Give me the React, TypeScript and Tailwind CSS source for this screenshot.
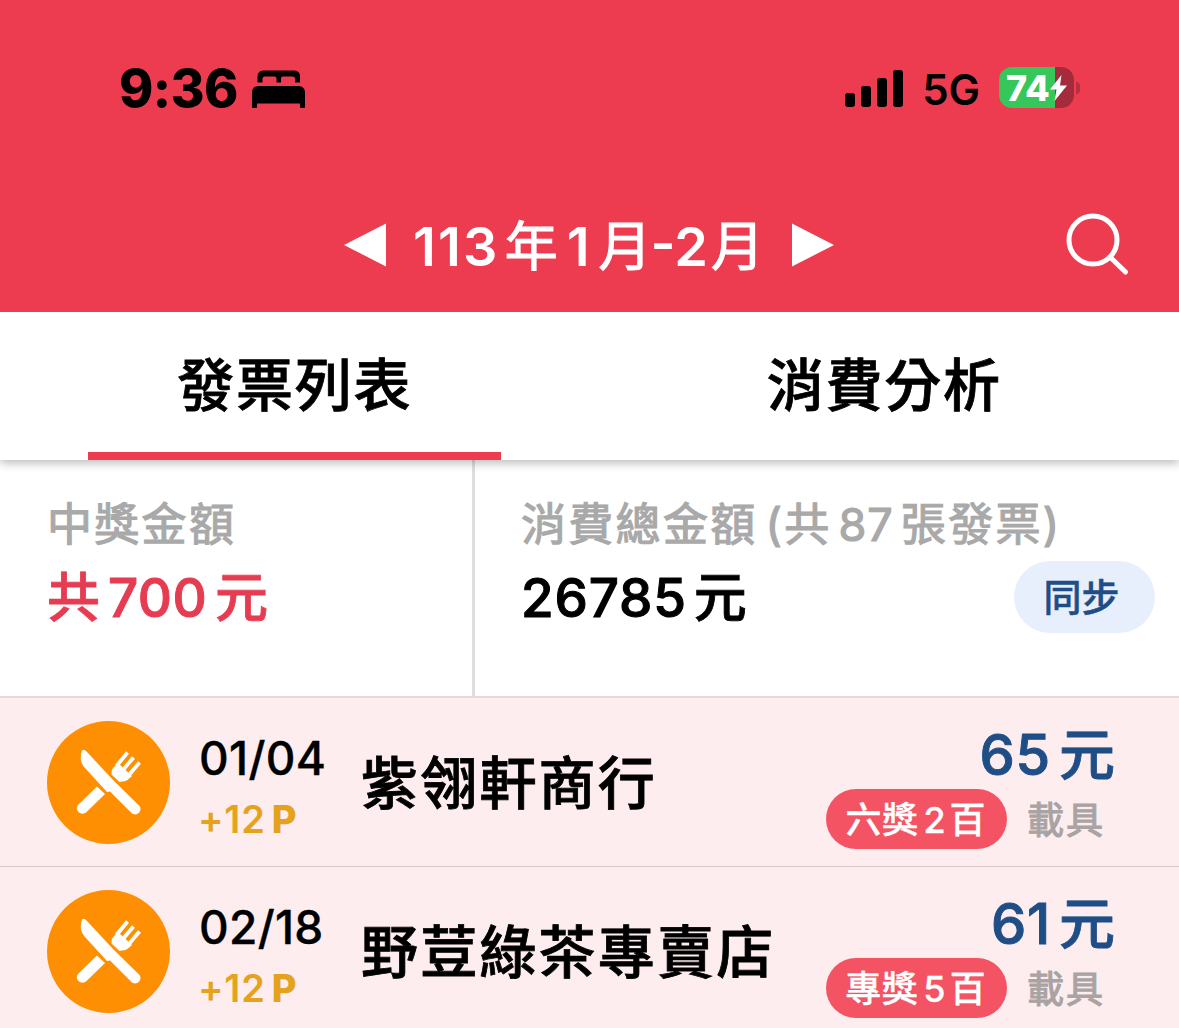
import clsx from 'clsx';

type Invoice = {
  id: string;
  date: string;
  points: string;
  shop: string;
  amount: string;
  prize: [string, string, string];
};

const invoices: Invoice[] = [
  { id: 'a', date: '01/04', points: '+12', shop: '紫翎軒商行', amount: '65', prize: ['六獎', '2', '百'] },
  { id: 'b', date: '02/18', points: '+12', shop: '野荳綠茶專賣店', amount: '61', prize: ['專獎', '5', '百'] }
];

const tabs = [
  { label: '發票列表', active: true },
  { label: '消費分析', active: false }
];

function BedIcon() {
  return (
    <svg width="54" height="38" viewBox="0 0 54 38" fill="#000">
      <path d="M5.500 12.500V6a5.500 5.500 0 0 1 5.500-5.500h31.500a5.500 5.500 0 0 1 5.500 5.500v6.500h-5V9a2.500 2.500 0 0 0-2.500-2.500h-9.500a2 2 0 0 0-2 2v4h-4.500v-4a2 2 0 0 0-2-2h-9.500a2.500 2.500 0 0 0-2.500 2.500v3.500z" />
      <path d="M0 37V22a6 6 0 0 1 6-6h41a6 6 0 0 1 6 6v15a1 1 0 0 1-1 1h-3a1 1 0 0 1-1-1v-3.500h-43v3.500a1 1 0 0 1-1 1h-3a1 1 0 0 1-1-1z" />
    </svg>
  );
}

function SignalIcon() {
  return (
    <svg width="58" height="37" viewBox="0 0 58 37" fill="#000">
      <rect x="0" y="23" width="10" height="14" rx="3" />
      <rect x="16" y="16" width="10" height="21" rx="3" />
      <rect x="32" y="8" width="10" height="29" rx="3" />
      <rect x="48" y="0" width="10" height="37" rx="3" />
    </svg>
  );
}

function Battery() {
  return (
    <div className="flex items-center pb-[1px]">
      <div className="flex h-[41px] w-[75px] items-center overflow-hidden rounded-[13px] bg-[linear-gradient(to_right,#35c759_56px,#a42b3b_56px)] pl-[7px]">
        <span className="text-[36px] leading-none font-extrabold text-white">74</span>
        <svg width="17" height="26" viewBox="0 0 17 26" fill="#fff">
          <path d="M11.500 0 0 14.500H6.500L4.500 26 17 10.500H10z" />
        </svg>
      </div>
      <div className="ml-[2px] h-[12px] w-[4px] rounded-r-full bg-[#b52f40]" />
    </div>
  );
}

function StatusBar() {
  return (
    <div className="flex h-[176px] items-center pr-[99px] pl-[119px]">
      <span className="pt-[2px] text-[52px] leading-none font-extrabold tracking-[-0.6px]">9:36</span>
      <div className="ml-[14px] pt-[1px]">
        <BedIcon />
      </div>
      <div className="ml-auto">
        <SignalIcon />
      </div>
      <span className="mr-[19px] ml-[19px] pt-[3px] text-[42px] leading-none font-semibold">5G</span>
      <Battery />
    </div>
  );
}

function PeriodPicker() {
  return (
    <div className="flex h-[136px] items-center pt-[1px] pr-[50px] pl-[344px] text-white">
      <svg width="42" height="44" viewBox="0 0 42 44" fill="currentColor">
        <path d="M0 22 42 0.500v43z" />
      </svg>
      <div className="ml-[27px] flex items-baseline pt-[4px] text-[54px] leading-[60px] font-semibold whitespace-nowrap">
        <span className="tracking-[2.2px]">113</span>
        <span className="ml-[5px] text-[53px] font-normal [-webkit-text-stroke:1.2px]">年</span>
        <span className="ml-[9px]">1</span>
        <span className="ml-[9px] text-[53px] font-normal [-webkit-text-stroke:1.2px]">月</span>
        <span className="ml-[-1px]">-2</span>
        <span className="ml-[3px] text-[53px] font-normal [-webkit-text-stroke:1.2px]">月</span>
      </div>
      <svg className="ml-[28px]" width="42" height="44" viewBox="0 0 42 44" fill="currentColor">
        <path d="M42 22 0 0.500v43z" />
      </svg>
      <svg className="ml-auto" width="63" height="63" viewBox="0 0 63 63" fill="none" stroke="currentColor" strokeWidth="5" strokeLinecap="round">
        <circle cx="27" cy="27" r="24" />
        <path d="m44 44 15.500 15" />
      </svg>
    </div>
  );
}

function Tabs() {
  return (
    <div className="relative z-10 flex h-[148px] bg-white shadow-[0_3px_9px_rgba(0,0,0,0.28)] [clip-path:inset(0_0_-20px_0)]">
      {tabs.map((tab) => (
        <div key={tab.label} className="flex flex-1 flex-col items-center justify-between">
          <span className="pt-[36px] text-[57px] leading-[76px] font-medium tracking-[1.7px] [-webkit-text-stroke:0.8px]">
            {tab.label}
          </span>
          <div className={clsx('h-[8px] w-[413px]', tab.active && 'bg-[#ed3b50]')} />
        </div>
      ))}
    </div>
  );
}

function Summary() {
  return (
    <div className="flex h-[236px] bg-white whitespace-nowrap">
      <div className="w-[475px] border-r-[3px] border-[#dedede] pt-[32px] pl-[47px]">
        <p className="text-[45px] leading-[66px] tracking-[2.3px] text-[#a9a9a9] [-webkit-text-stroke:1.2px]">中獎金額</p>
        <p className="flex items-baseline text-[53px] leading-[80px] font-medium text-[#e63c52]">
          <span className="[-webkit-text-stroke:0.8px]">共</span>
          <span className="ml-[8px] tracking-[0.4px] [-webkit-text-stroke:1px]">700</span>
          <span className="ml-[8px] [-webkit-text-stroke:0.8px]">元</span>
        </p>
      </div>
      <div className="flex-1 pt-[32px] pr-[24px] pl-[46px]">
        <p className="flex items-baseline text-[45px] leading-[66px] tracking-[2.3px] text-[#a9a9a9] [-webkit-text-stroke:1.2px]">
          <span>消費總金額</span>
          <span className="ml-[8px]">(共</span>
          <span className="ml-[7px] tracking-[1px]">87</span>
          <span className="ml-[7px]">張發票)</span>
        </p>
        <div className="flex items-center">
          <p className="flex items-baseline text-[53px] leading-[80px] font-medium">
            <span className="tracking-[0.8px] [-webkit-text-stroke:1px]">26785</span>
            <span className="ml-[7px] [-webkit-text-stroke:0.8px]">元</span>
          </p>
          <button className="mt-[-2px] ml-auto h-[72px] w-[141px] rounded-full bg-[#e7effd] pr-[6px] text-[38px] leading-none font-medium text-[#1f4e87] [-webkit-text-stroke:0.5px]">
            同步
          </button>
        </div>
      </div>
    </div>
  );
}

function DiningIcon() {
  return (
    <div className="flex size-[123px] shrink-0 items-center justify-center rounded-full bg-[#ff8f02]">
      <svg width="66" height="66" viewBox="0 0 66 66" fill="#fff">
        {/* knife */}
        <path d="M6 1.500c1.500-1 3-0.500 5 1.500L37.500 31.500 63 56.500c4.500 4.500-2 12-7.500 7.500L34 42.500l-3 0.500L9 19C4 14 4 7 6 1.500z" />
        {/* fork */}
        <path d="M21 37.500l8 7.500L10.500 63C5 68-2.500 60.500 2.500 55.500z" />
        <path d="M37.500 18.500 42 14l14 13-4 3.500c-3 2.500-6 1.500-8.500 2.500l-8-7.500c0-2.500 0-5 2-7z" />
        <path d="M40.500 17 51.500 3.500M46.500 21.500 57.500 8.500M52.500 26.500 63.500 13.500" stroke="#fff" strokeWidth="3.800" />
      </svg>
    </div>
  );
}

function InvoiceRow({ invoice }: { invoice: Invoice }) {
  const [prizeName, digit, unit] = invoice.prize;

  return (
    <div className="flex h-[169px] items-center border-b border-[#d9c8cb] bg-[#fdedef] pr-[64px] pl-[47px] whitespace-nowrap">
      <DiningIcon />
      <div className="ml-[29px] w-[162px] pt-[12px]">
        <p className="text-[46px] leading-[62px] font-medium tracking-[0.3px] [-webkit-text-stroke:0.4px]">{invoice.date}</p>
        <p className="ml-[-1px] flex items-baseline text-[38px] leading-[60px] font-semibold text-[#e5a31d]">
          <span className="tracking-[0.8px]">{invoice.points}</span>
          <span className="ml-[6px] font-extrabold">P</span>
        </p>
      </div>
      <p className="pt-[4px] text-[57px] leading-[80px] font-medium tracking-[2.2px] [-webkit-text-stroke:0.8px]">{invoice.shop}</p>
      <div className="ml-auto flex flex-col items-end pt-[4px]">
        <p className="flex items-baseline pt-[2px] text-[56px] leading-[68px] font-medium text-[#1f4e87]">
          <span className="tracking-[0.8px] [-webkit-text-stroke:1px]">{invoice.amount}</span>
          <span className="ml-[8px] [-webkit-text-stroke:0.8px]">元</span>
        </p>
        <div className="mr-[10px] flex items-center text-[37px]">
          <div className="flex h-[60px] w-[181px] items-baseline justify-center rounded-full bg-[#f35363] pr-[2px] text-[36px] leading-[62px] font-medium text-white [-webkit-text-stroke:0.3px]">
            <span className="tracking-[0.5px]">{prizeName}</span>
            <span className="ml-[5px]">{digit}</span>
            <span className="ml-[4px]">{unit}</span>
          </div>
          <span className="ml-[20px] pt-[3px] leading-[56px] tracking-[2px] text-[#a9a3a4] [-webkit-text-stroke:1.1px]">載具</span>
        </div>
      </div>
    </div>
  );
}

export default function App() {
  return (
    <div className="h-[1028px] w-[1179px] overflow-hidden bg-white font-['Inter','Noto_Sans_CJK_TC',sans-serif] text-black">
      <header className="bg-[#ed3b50]">
        <StatusBar />
        <PeriodPicker />
      </header>
      <Tabs />
      <Summary />
      <div className="border-t-[3px] border-[#e2dadb]">
        <div className="-mt-px">
          {invoices.map((invoice) => (
            <InvoiceRow key={invoice.id} invoice={invoice} />
          ))}
        </div>
      </div>
    </div>
  );
}
